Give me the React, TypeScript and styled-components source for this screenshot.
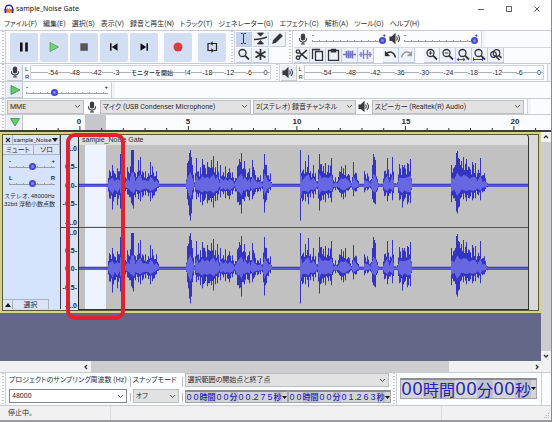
import React, { useState } from "react";
import styled, { createGlobalStyle, css } from "styled-components";

const Global = createGlobalStyle`
  *, *::before, *::after { box-sizing: border-box; }
  html, body { margin: 0; padding: 0; }
  body { background: #f0f0f0; }
  button, input, select { font: inherit; font-feature-settings: inherit; color: inherit; margin: 0; padding: 0; border: 0; border-radius: 0; background: none; }
  svg { display: block; flex: none; }
`;

const INK = "#2c2c30";
const BLUE = "#3333c4";

/* ---------- window frame ---------- */

const Window = styled.div`
  display: flex;
  flex-direction: column;
  min-height: 100vh;
  overflow: hidden;
  border-right: 1px solid #8a8a8e;
  border-bottom: 2px solid #9a9aa0;
  background: #fbfcff;
  color: ${INK};
  font: 7px/10px Roboto, "Noto Sans CJK JP", sans-serif;
  font-feature-settings: "palt";
`;

const TitleBar = styled.header`
  display: flex;
  align-items: center;
  gap: 2px;
  height: 17px;
  padding-left: 4px;
  background: #fff;
  h1 {
    flex: 1;
    margin: 0;
    font: 400 7px/12px "Noto Sans", sans-serif;
    color: #111;
  }
`;

const Caption = styled.div`
  display: flex;
`;

const CaptionButton = styled.button`
  display: grid;
  place-items: center;
  width: 28px;
  height: 17px;
`;

const MenuBar = styled.nav`
  display: flex;
  align-items: center;
  gap: 6px;
  height: 13px;
  padding-left: 4px;
  background: #fff;
  white-space: nowrap;
`;

const MenuButton = styled.button`
  line-height: 12px;
`;

/* ---------- toolbars ---------- */

const Bar = styled.div<{ $h: number }>`
  display: flex;
  align-items: center;
  height: ${(p) => p.$h}px;
  border-top: 1px solid #c9cad2;
`;

const Grip = styled.span<{ $margin?: string }>`
  flex: none;
  align-self: stretch;
  width: 5px;
  margin: ${(p) => p.$margin ?? "0 1px 0 1px"};
  border-right: 1px solid #cfd0d8;
  background: repeating-linear-gradient(#c4c5ce 0 1px, transparent 1px 3px) 1px 0 / 2px 100% no-repeat;
`;

const Divider = styled.span`
  flex: none;
  align-self: stretch;
  width: 4px;
  margin-left: 3px;
  border-left: 1px solid #cfd0d8;
  background: #f3f4f8;
`;

const Transport = styled.div`
  display: flex;
  gap: 2px;
  padding-left: 3px;
`;

const TransportButton = styled.button<{ $apart?: boolean }>`
  display: grid;
  place-items: center;
  width: 28px;
  height: 29px;
  margin-left: ${(p) => (p.$apart ? 4 : 0)}px;
  border-radius: 2px;
  background: #d2def3;
`;

const ToolGrid = styled.div`
  display: grid;
  grid-template-columns: repeat(3, 16px);
  grid-template-rows: repeat(2, 15px);
  gap: 1px;
`;

const ToolButton = styled.button<{ $on?: boolean; $start?: boolean }>`
  display: grid;
  place-items: center;
  width: 16px;
  height: 15px;
  margin-left: ${(p) => (p.$start ? 9 : 0)}px;
  border-right: 1px solid #c3cbe0;
  border-bottom: 1px solid #c3cbe0;
  background: ${(p) => (p.$on ? "#c3d3ee" : "#eef2fb")};
`;

const Stack = styled.div`
  display: flex;
  flex: 1;
  flex-direction: column;
  align-self: stretch;
`;

const StackRow = styled.div`
  display: flex;
  flex: 1;
  align-items: center;
  & + & { border-top: 1px solid #d5d6de; }
`;

const SliderBox = styled.label<{ $w: number }>`
  display: flex;
  flex-direction: column;
  flex: none;
  width: ${(p) => p.$w}px;
  font: 700 6px/4px "Liberation Sans", sans-serif;
`;

const SliderEnds = styled.span`
  display: flex;
  justify-content: space-between;
  height: 4px;
`;

const Slider = styled.input`
  appearance: none;
  display: block;
  width: 100%;
  height: 7px;
  background:
    linear-gradient(#9c9ca6, #9c9ca6) 0 4px / 100% 1px no-repeat,
    repeating-linear-gradient(90deg, #9c9ca6 0 1px, transparent 1px 7px) 0 3px / 100% 1px no-repeat;
  &::-webkit-slider-thumb {
    appearance: none;
    width: 7px;
    height: 7px;
    border: 2px solid #4848d8;
    border-radius: 50%;
    background: #8686e0;
  }
`;

const IconSlot = styled.span<{ $w: number }>`
  display: grid;
  flex: none;
  place-items: center;
  width: ${(p) => p.$w}px;
`;

const SquareButton = styled.button`
  display: grid;
  flex: none;
  place-items: center;
  width: 16px;
  height: 16px;
  border: 1px solid #c3c8d8;
  border-width: 0 1px 1px 0;
  background: #e9eefa;
`;

const Channels = styled.span`
  display: flex;
  flex-direction: column;
  width: 7px;
  padding-left: 2px;
  font: 6px/8px "Liberation Sans", sans-serif;
`;

const Meter = styled.div`
  display: flex;
  flex: 1;
  align-items: center;
  justify-content: space-between;
  align-self: stretch;
  margin: 1px 0;
  padding: 0 2px 0 17px;
  border: 1px solid #d3d4da;
  background: linear-gradient(#aeb0b8, #aeb0b8) 0 50% / 100% 1px no-repeat;
  font: 7px/9px "Liberation Sans", sans-serif;
  white-space: nowrap;
`;

const MeterMark = styled.span`
  background: #fbfcff;
`;

const MeterStart = styled.button`
  background: #fbfcff;
  font: 500 6px/9px "Noto Sans CJK JP", sans-serif;
`;

/* ---------- drop-downs ---------- */

const SelectFrame = styled.span<{ $grow?: number; $white?: boolean }>`
  display: grid;
  flex: ${(p) => p.$grow ?? 1} 1 0;
  align-items: center;
  height: 14px;
  border: 1px solid ${(p) => (p.$white ? "#85868c" : "#bcbdc0")};
  background: ${(p) => (p.$white ? "#fff" : "#e2e2e3")};
  select, svg { grid-area: 1 / 1; }
  select {
    appearance: none;
    width: 100%;
    height: 12px;
    padding-left: 2px;
    text-overflow: ellipsis;
  }
  svg { justify-self: end; margin-right: 2px; pointer-events: none; }
`;

function Select(props: { label: string; value: string; grow?: number; white?: boolean; id?: string }) {
  return (
    <SelectFrame $grow={props.grow} $white={props.white}>
      <select id={props.id} aria-label={props.id ? undefined : props.label} defaultValue={props.value}>
        <option>{props.value}</option>
      </select>
      <svg width="7" height="5" viewBox="0 0 7 5" fill="none" stroke="#555" aria-hidden>
        <path d="M1 1l2.5 2.5L6 1" />
      </svg>
    </SelectFrame>
  );
}

/* ---------- timeline ---------- */

const Ruler = styled.div`
  display: grid;
  flex: 1;
  align-self: stretch;
  svg, ol { grid-area: 1 / 1; width: 100%; height: 100%; }
`;

const RulerLabels = styled.ol`
  display: grid;
  grid-template-columns: 56fr repeat(4, 109fr) 36fr;
  margin: 0;
  padding: 0;
  list-style: none;
  font: 700 8px/14px "Liberation Sans", sans-serif;
  li { width: 18px; margin-left: -9px; text-align: center; }
  li:first-child { grid-column: 2; }
`;

/* ---------- tracks ---------- */

const Workspace = styled.main`
  display: flex;
  flex: 1;
  border-top: 2px solid #3c3c44;
`;

const Canvas = styled.div`
  position: relative;
  flex: 1;
  background: #646785;
`;

const Track = styled.section`
  display: flex;
  height: 181px;
  border: 2px solid #d4cf93;
  border-width: 2px 2px 3px 2px;
  outline: 1px solid #5c5a34;
  outline-offset: -3px;
  background: #d9d9d9;
`;

const TrackPanel = styled.div`
  display: flex;
  flex-direction: column;
  width: 58px;
  margin: 1px 0 1px 1px;
  border-right: 1px solid #3b3b40;
  background: #d5e3fd;
`;

const PanelRow = styled.div`
  display: flex;
  border-bottom: 1px solid #a9b4cb;
`;

const PanelButton = styled.button<{ $grow?: number }>`
  display: flex;
  flex: ${(p) => p.$grow ?? 0} 0 auto;
  align-items: center;
  justify-content: center;
  gap: 1px;
  min-width: 10px;
  height: 9px;
  border-right: 1px solid #a9b4cb;
  background: #dbe5f7;
  white-space: nowrap;
`;

const TrackName = styled(PanelButton)`
  font-size: 6px;
`;

const PanelSlider = styled.div`
  padding: 4px 5px 2px 6px;
`;

const Format = styled.div`
  display: flex;
  flex-direction: column;
  margin: 3px 0 0 1px;
  font: 6px/8px Roboto, "Noto Sans CJK JP", sans-serif;
  white-space: nowrap;
`;

const PanelFoot = styled.div`
  display: flex;
  width: 46px;
  margin-top: auto;
  border-top: 1px solid #a9b4cb;
`;

const Scale = styled.div`
  display: flex;
  flex-direction: column;
  width: 18px;
  padding-top: 10px;
  border-right: 1px solid #222;
  background: #d9e3f5;
`;

const ScaleHalf = styled.ol`
  display: flex;
  flex: 1;
  flex-direction: column;
  justify-content: space-between;
  margin: 0;
  padding: 0 1px 0 0;
  list-style: none;
  font: 700 7px/9px "Liberation Sans", sans-serif;
  text-align: right;
  & + & { border-top: 1px solid #444; }
`;

const ClipLane = styled.div`
  display: flex;
  flex: 1;
  padding-right: 9px;
  border-right: 1px solid #222;
`;

const Clip = styled.div`
  display: flex;
  flex: 1;
  flex-direction: column;
  border: 1px solid #333;
  border-left: 0;
  border-top-right-radius: 4px;
  background: #c1c1c1;
`;

const ClipTitle = styled.div`
  height: 10px;
  padding-left: 3px;
  border-top-right-radius: 3px;
  background: #dedede;
  font: 7px/10px "Liberation Sans", sans-serif;
`;

const Channel = styled.div`
  flex: 1;
  min-height: 0;
  & + & { border-top: 1px solid #555; }
  svg { width: 100%; height: 100%; }
`;

const Highlight = styled.div`
  position: absolute;
  top: 1px;
  left: 66px;
  width: 59px;
  height: 187px;
  border: 4px solid #dc2430;
  border-radius: 9px;
  pointer-events: none;
`;

const scrollPart = css`
  display: grid;
  flex: none;
  place-items: center;
  background: #f1f1f2;
`;

const VScroll = styled.div`
  display: flex;
  flex-direction: column;
  width: 10px;
  background: #cdcdcf;
`;

const VArrow = styled.button`
  ${scrollPart}
  height: 10px;
`;

const HScroll = styled.div`
  display: flex;
  height: 11px;
  background: #f1f1f2;
`;

const HArrow = styled.button<{ $lead?: boolean }>`
  ${scrollPart}
  width: 10px;
  margin-left: ${(p) => (p.$lead ? "81px" : "0")};
`;

const HThumb = styled.span<{ $grow: number; $on?: boolean }>`
  flex: ${(p) => p.$grow} 1 0;
  background: ${(p) => (p.$on ? "#cdcdcf" : "transparent")};
`;

/* ---------- footer ---------- */

const SelectionBar = styled.div`
  display: flex;
  height: 33px;
  border-top: 1px solid #c9cad2;
`;

const Field = styled.div<{ $grow: number }>`
  display: flex;
  flex: ${(p) => p.$grow} 1 0;
  flex-direction: column;
  justify-content: space-between;
  min-width: 0;
  margin: 0 3px 2px 2px;
  white-space: nowrap;
  label { line-height: 14px; }
  ${SelectFrame} { flex: none; }
`;

const VRule = styled.span`
  width: 1px;
  margin: 4px 0;
  background: repeating-linear-gradient(#b9bac2 0 10px, transparent 10px 16px);
`;

const Times = styled.div`
  display: flex;
  justify-content: space-between;
`;

const TimeBox = styled.div<{ $big?: boolean }>`
  display: flex;
  align-items: center;
  border: 1px solid #a5a6ac;
  border-top: 2px solid #8b8c94;
  background: #d3d4d8;
  color: #2222b4;
  font-family: "Liberation Sans", "Noto Sans CJK JP", sans-serif;
  font-size: ${(p) => (p.$big ? 18 : 9)}px;
  line-height: ${(p) => (p.$big ? 18 : 10)}px;
  height: ${(p) => (p.$big ? 21 : 13)}px;
`;

const Cell = styled.span<{ $w: number }>`
  width: ${(p) => p.$w}px;
  text-align: center;
  white-space: nowrap;
`;

const Unit = styled.span<{ $big?: boolean }>`
  background: #c1c2c9;
  font: ${(p) => (p.$big ? "400 16px/18px" : "500 8px/10px")} "Noto Sans CJK JP", sans-serif;
  font-feature-settings: normal;
`;

const BigTimeWrap = styled.div`
  display: flex;
  align-items: center;
  padding: 0 4px 2px 3px;
  border-right: 1px solid #cfd0d8;
  margin-right: 9px;
`;

const StatusBar = styled.footer`
  display: flex;
  height: 15px;
  border-top: 1px solid #c9cad2;
  background: #f0f0f1;
  line-height: 15px;
  align-items: stretch;
`;

const StatusCell = styled.span<{ $grow: number }>`
  flex: ${(p) => p.$grow} 1 0;
  padding-left: 8px;
  border-right: 1px solid #dcdce0;
  &:last-of-type { border: 0; }
`;

/* ---------- icons ---------- */

const Mic = () => (
  <svg width="10" height="12" viewBox="0 0 10 12" fill="none" stroke="#3a3a40" strokeWidth="1.1">
    <rect x="3.4" y="1" width="3.2" height="6" rx="1.6" fill="#3a3a40" />
    <path d="M1.5 5.2v.6a3.5 3.2 0 0 0 7 0v-.6M5 9v2M3 11h4" />
  </svg>
);

const Speaker = () => (
  <svg width="12" height="11" viewBox="0 0 12 11" fill="none" stroke="#3a3a40" strokeWidth="1.1">
    <path d="M1 4h2l3-3v9L3 7.400H1z" fill="#3a3a40" />
    <path d="M7.500 3.500q1.500 2 0 4M9 2q3 3.500 0 7" />
  </svg>
);

const Lens = ({ children }: { children?: React.ReactNode }) => (
  <svg width="13" height="13" viewBox="0 0 13 13" fill="none" stroke="#33333a" strokeWidth="1.3">
    <circle cx="5.500" cy="5" r="3.500" />
    <path d="M8 7.600L12 11.500" strokeWidth="1.800" />
    {children}
  </svg>
);

const Triangle = ({ down }: { down?: boolean }) => (
  <svg width="12" height="12" viewBox="0 0 12 12" fill="#62cf62" stroke="#3b8a45" strokeWidth="0.8">
    <path d={down ? "M1.500 2.500h9L6 10z" : "M2 1.500v9L11 6z"} />
  </svg>
);

const Caret = ({ up }: { up?: boolean }) => (
  <svg width="6" height="4" viewBox="0 0 6 4" fill="#111">
    <path d={up ? "M0 4h6L3 0z" : "M0 0h6L3 4z"} />
  </svg>
);

const Chevron = ({ d, thin }: { d: string; thin?: boolean }) => (
  <svg width="6" height="6" viewBox="0 0 6 6" fill="none" stroke="#333" strokeWidth={thin ? 0.8 : 1.3}>
    <path d={d} />
  </svg>
);

const transport: { name: string; apart?: boolean; icon: React.ReactNode }[] = [
  { name: "一時停止", icon: <path d="M5 4.500h2.600v9H5zM10.200 4.500h2.600v9h-2.600z" fill="#111" /> },
  { name: "再生", icon: <path d="M5 4.500v9L13.500 9z" fill="#74d474" stroke="#4d9e57" strokeWidth=".8" /> },
  { name: "停止", icon: <path d="M5.300 5.300h7.500v7.500H5.300z" fill="#55565c" /> },
  { name: "先頭へ", icon: <path d="M5 5.200h1.500v7.600H5zM12.500 5.200v7.600L6.800 9z" fill="#111" /> },
  { name: "末尾へ", icon: <path d="M11.500 5.200H13v7.600h-1.500zM5.500 5.200v7.600L11.200 9z" fill="#111" /> },
  { name: "録音", apart: true, icon: <circle cx="9" cy="9" r="4.500" fill="#e03a40" /> },
  {
    name: "ループ",
    apart: true,
    icon: (
      <g fill="none" stroke="#222" strokeWidth="1.200">
        <path d="M7 5.500H5v7h4M11 12.500h2.500v-7H9" />
        <path d="M9.500 3.500L7 5.500l2.500 2zM8.500 10.500l2.500 2-2.500 2z" fill="#222" strokeWidth=".2" />
      </g>
    ),
  },
];

const glyph = { width: 13, height: 13, viewBox: "0 0 13 13", fill: "none", stroke: "#303036", strokeWidth: 1.3 };

const tools: { name: string; icon: React.ReactNode }[] = [
  { name: "選択ツール", icon: <svg {...glyph} strokeWidth="1"><path d="M6.500 2v9M4 1.500h1.500l1 .8 1-.8H9M4 11.500h1.500l1-.8 1 .8H9" /></svg> },
  { name: "エンベロープ", icon: <svg {...glyph}><path d="M0 7.500c4-.2 9-.8 13-2.500" strokeWidth="1.600" /><path d="M3.500 1h6L6.500 4.200zM3.500 12h6L6.500 8.500z" fill="#303036" strokeWidth=".8" /></svg> },
  { name: "描画ツール", icon: <svg {...glyph}><path d="M1.500 11.500l1-3.500 6.500-6.500L11.500 4 5 10.500z" fill="#303036" strokeWidth=".5" /></svg> },
  { name: "ズームツール", icon: <Lens /> },
  { name: "マルチツール", icon: <svg {...glyph} strokeWidth="1.700"><path d="M6.500 1v11M1.500 3.500l10 6M11.500 3.500l-10 6" /></svg> },
];

const edits: { name: string; start?: boolean; icon: React.ReactNode }[] = [
  { name: "切り取り", icon: <svg {...glyph}><circle cx="3" cy="3.500" r="1.700" /><circle cx="3" cy="9.700" r="1.700" /><path d="M4.500 4.500L12 10.800M4.500 8.700L12 2" strokeWidth="1.600" /></svg> },
  { name: "コピー", icon: <svg {...glyph}><path d="M4.500 3.500h7v9h-7zM2 10.500H1.500v-9h7V2" /></svg> },
  { name: "貼り付け", icon: <svg {...glyph}><path d="M4.500 2.500h-3v9.800h10V2.500h-3" /><path d="M4.500 1.500h4v2.300h-4z" fill="#303036" /></svg> },
  { name: "トリム", icon: <svg {...glyph} stroke="#7274cc" strokeWidth="1"><path d="M0 6.500h13M3.500 3v7M5.500 2.500v8M7.500 3v7M9.500 2.500v8" strokeWidth="1.600" /></svg> },
  { name: "無音化", icon: <svg {...glyph} stroke="#8486d2" strokeWidth="1.400"><path d="M0 6.500h13M2 4v5M4.500 2v9M8.500 2v9M11 4v5" /></svg> },
  { name: "元に戻す", start: true, icon: <svg {...glyph} strokeWidth="1.600"><path d="M2 6c3-3 8-3 9.500 3.500" /><path d="M1 3v5h5z" fill="#303036" strokeWidth=".3" /></svg> },
  { name: "やり直す", icon: <svg {...glyph} stroke="#9a9ca6" strokeWidth="1.500"><path d="M11 6C8 3 3 3 1.500 9.500" /><path d="M12 3v5H7z" fill="#9a9ca6" strokeWidth=".3" /></svg> },
  { name: "拡大", start: true, icon: <Lens><path d="M3.700 5h3.600M5.500 3.200v3.600" strokeWidth="1" /></Lens> },
  { name: "縮小", icon: <Lens><path d="M3.700 5h3.600" strokeWidth="1" /></Lens> },
  { name: "選択範囲に合わせる", icon: <Lens><path d="M0 11.500h8M2 10l-2 1.500L2 13M6 10l2 1.500L6 13" stroke="#3a3ac8" strokeWidth=".9" /></Lens> },
  { name: "全体に合わせる", icon: <Lens><path d="M.5 11.500h9M.5 9.500v3.500M9.500 9.500v3.500" stroke="#3a3ac8" strokeWidth="1" /></Lens> },
  { name: "ズーム切替", icon: <svg {...glyph} strokeWidth="1.200"><circle cx="7.500" cy="5" r="3.300" /><circle cx="4.500" cy="6.500" r="2.800" /><path d="M6.500 8l4 4M10 7.500l2.500 2.500" strokeWidth="1.600" /></svg> },
];

/* ---------- waveform ---------- */

// [time position, positive peak, negative peak]
const peaks: [number, number, number][] = [
  [79, 1, 1], [107, 1, 1], [109, 15, 13], [112, 20, 24], [114, 12, 12], [117, 17, 20], [119, 14, 10], [120, 31, 23],
  [122, 20, 12], [125, 8, 6], [127, 18, 9], [129, 12, 12], [131, 35, 18], [132, 35, 20], [133, 35, 23], [135, 12, 12], [138, 25, 14],
  [140, 28, 16], [142, 14, 12], [145, 14, 10], [148, 12, 11], [150, 23, 16], [152, 19, 13], [154, 9, 10], [156, 14, 6],
  [159, 1, 1], [185, 1, 1], [187, 22, 14], [189, 32, 30], [190, 35, 35], [191, 28, 28], [192, 20, 14], [194, 3, 2], [196, 27, 14],
  [198, 14, 12], [200, 18, 17], [202, 26, 20], [204, 20, 15], [207, 23, 18], [209, 18, 15], [211, 25, 17], [213, 29, 22],
  [215, 18, 16], [217, 24, 15], [219, 6, 5], [220, 20, 12], [223, 13, 9], [225, 19, 13], [227, 12, 10], [229, 17, 14],
  [232, 13, 9], [234, 4, 3], [237, 19, 17], [239, 26, 20], [241, 32, 28], [243, 17, 14], [244, 24, 16], [247, 12, 11],
  [249, 17, 15], [250, 8, 6], [252, 25, 14], [254, 15, 9], [257, 8, 7], [260, 10, 6], [262, 4, 4], [264, 31, 27],
  [266, 20, 15], [268, 10, 8], [270, 12, 5], [272, 1, 1], [299, 1, 1], [300, 35, 35], [302, 14, 16], [305, 24, 16],
  [308, 30, 19], [310, 14, 12], [313, 20, 13], [315, 12, 9], [317, 4, 4], [319, 31, 25], [321, 21, 15], [325, 22, 17],
  [328, 20, 13], [331, 27, 17], [333, 5, 4], [335, 8, 5], [337, 4, 4], [339, 14, 7], [341, 19, 12], [343, 17, 14],
  [345, 20, 12], [349, 10, 4], [351, 2, 2], [353, 23, 11], [356, 12, 6], [359, 1, 1], [363, 1, 1], [364, 14, 7],
  [367, 12, 5], [370, 5, 3], [372, 20, 14], [373, 31, 17], [374, 28, 18], [375, 25, 19], [378, 2, 2], [382, 1, 1], [384, 14, 11],
  [387, 27, 16], [389, 8, 8], [392, 28, 15], [394, 2, 2], [397, 3, 2], [399, 21, 15], [402, 20, 22], [404, 20, 14],
  [407, 22, 19], [410, 26, 18], [412, 1, 1], [450, 1, 1], [451, 20, 17], [454, 18, 13], [456, 32, 26], [457, 34, 28], [459, 26, 21],
  [461, 24, 12], [463, 28, 14], [466, 26, 16], [469, 18, 13], [472, 23, 15], [475, 22, 13], [477, 12, 9], [480, 27, 15],
  [482, 10, 7], [484, 12, 6], [487, 2, 2], [489, 1, 1], [528, 1, 1],
];

const dips = [0.8, 0.5, 0.65, 0.9, 0.55];

function envelope(scale: number, floor: number, steady = false) {
  const top: string[] = [];
  const bottom: string[] = [];
  for (let i = 0; i < peaks.length - 1; i++) {
    const [x0, u0, d0] = peaks[i];
    const [x1, u1, d1] = peaks[i + 1];
    for (let x = x0; x < x1; x++) {
      const t = (x - x0) / (x1 - x0);
      const dip = x === x0 || steady ? 1 : dips[x % 5];
      const up = Math.max(floor, (u0 + (u1 - u0) * t) * dip * scale);
      const down = Math.max(floor, (d0 + (d1 - d0) * t) * dip * scale);
      top.push(`${x - 79} ${40 - up}h1`);
      bottom.unshift(`${x - 78} ${40 + down}h-1`);
    }
  }
  return `M${top.join("L")}L${bottom.join("L")}Z`;
}

const peakPath = envelope(1, 1.5);
const rmsPath = envelope(0.36, 0.5, true);

const Waveform = ({ label }: { label: string }) => (
  <svg viewBox="0 0 449 81" preserveAspectRatio="none" role="img" aria-label={label}>
    <rect x="6" width="21" height="81" fill="#edf3ff" />
    <path d={peakPath} fill={BLUE} />
    <path d={rmsPath} fill="#6767e2" />
  </svg>
);

/* ---------- composed parts ---------- */

function LevelSlider(props: { label: string; width: number; value: number; ends?: [string, string] }) {
  const [value, setValue] = useState(props.value);
  const [low, high] = props.ends ?? ["-", "+"];
  return (
    <SliderBox $w={props.width}>
      <SliderEnds><span>{low}</span><span>{high}</span></SliderEnds>
      <Slider type="range" aria-label={props.label} value={value} onChange={(e) => setValue(Number(e.target.value))} />
    </SliderBox>
  );
}

function Time({ text, big }: { text: string; big?: boolean }) {
  return (
    <TimeBox $big={big}>
      {text.split("").map((c, i) =>
        /\d/.test(c) ? (
          <Cell key={i} $w={big ? 11 : 7}>{c}</Cell>
        ) : c === "." ? (
          <Cell key={i} $w={1}>{c}</Cell>
        ) : (
          <Unit key={i} $big={big}>{c}</Unit>
        ),
      )}
      <svg width="5" height="3" viewBox="0 0 5 3" fill="#111"><path d="M0 0h5L2.500 3z" /></svg>
    </TimeBox>
  );
}

const menus = ["ファイル(F)", "編集(E)", "選択(S)", "表示(V)", "録音と再生(N)", "トラック(T)", "ジェネレーター(G)", "エフェクト(C)", "解析(A)", "ツール(O)", "ヘルプ(H)"];
const levels = ["-54", "-48", "-42", "-36", "-30", "-24", "-18", "-12", "-6", "0"];
const amplitudes = ["1.0", "0.5-", "0.0-", "-0.5-", "-1.0"];

export default function App() {
  return (
    <Window>
      <Global />
      <TitleBar>
        <svg width="10" height="10" viewBox="0 0 10 10" fill="none">
          <path d="M1.300 6.500V5a3.700 3.700 0 0 1 7.400 0v1.500" stroke="#2a2ab0" strokeWidth="1.500" />
          <path d="M.5 5h2v4h-2zM7.500 5h2v4h-2z" fill="#2a2ab0" />
          <path d="M2.500 6l1-1.500 1 1 1-1 1 1 1 .5-.8 2-1.200.5-1.500-.3-1.200-.2z" fill="#f08a20" stroke="#d4371c" strokeWidth=".6" />
        </svg>
        <h1>sample_Noise Gate</h1>
        <Caption>
          <CaptionButton aria-label="最小化"><Chevron thin d="M0 3.500h6" /></CaptionButton>
          <CaptionButton aria-label="最大化"><Chevron thin d="M.5 .5h5v5h-5z" /></CaptionButton>
          <CaptionButton aria-label="閉じる"><Chevron thin d="M.5 .5l5 5M5.500 .5l-5 5" /></CaptionButton>
        </Caption>
      </TitleBar>
      <MenuBar>
        {menus.map((m) => <MenuButton key={m}>{m}</MenuButton>)}
      </MenuBar>

      <Bar $h={33}>
        <Grip $margin="0 1px 0 1px" />
        <Transport>
          {transport.map((t) => (
            <TransportButton key={t.name} aria-label={t.name} $apart={t.apart}>
              <svg width="18" height="18" viewBox="0 0 18 18">{t.icon}</svg>
            </TransportButton>
          ))}
        </Transport>
        <Grip $margin="0 1px 0 4px" />
        <ToolGrid>
          {tools.map((t, i) => (
            <ToolButton key={t.name} aria-label={t.name} $on={i === 0}>{t.icon}</ToolButton>
          ))}
        </ToolGrid>
        <Grip $margin="0 1px 0 2px" />
        <Stack>
          <StackRow>
            <IconSlot $w={18}><Mic /></IconSlot>
            <LevelSlider label="録音音量" width={74} value={100} />
            <IconSlot $w={18}><Speaker /></IconSlot>
            <LevelSlider label="再生音量" width={74} value={100} />
            <Divider />
          </StackRow>
          <StackRow>
            {edits.map((t) => (
              <ToolButton key={t.name} aria-label={t.name} $start={t.start}>{t.icon}</ToolButton>
            ))}
          </StackRow>
        </Stack>
      </Bar>

      <Bar $h={18}>
        <Grip />
        <SquareButton aria-label="録音メーター"><Mic /></SquareButton>
        <Channels><span>L</span><span>R</span></Channels>
        <Meter>
          {levels.slice(0, 3).map((l) => <MeterMark key={l}>{l}</MeterMark>)}
          <MeterMark>-3</MeterMark>
          <MeterStart>モニターを開始</MeterStart>
          <MeterMark>!4</MeterMark>
          {levels.slice(6).map((l) => <MeterMark key={l}>{l}</MeterMark>)}
        </Meter>
        <Grip $margin="0 1px 0 4px" />
        <SquareButton aria-label="再生メーター"><Speaker /></SquareButton>
        <Channels><span>L</span><span>R</span></Channels>
        <Meter>
          {levels.map((l) => <MeterMark key={l}>{l}</MeterMark>)}
        </Meter>
        <Divider />
      </Bar>

      <Bar $h={17}>
        <Grip />
        <SquareButton aria-label="指定速度で再生"><Triangle /></SquareButton>
        <IconSlot $w={3} />
        <LevelSlider label="再生速度" width={82} value={33} />
        <Divider />
      </Bar>

      <Bar $h={16}>
        <Grip />
        <Select label="オーディオホスト" value="MME" grow={76} />
        <IconSlot $w={16}><Mic /></IconSlot>
        <Select label="録音デバイス" value="マイク (USB Condenser Microphone)" grow={152} />
        <IconSlot $w={2} />
        <Select label="録音チャンネル" value="2(ステレオ) 録音チャンネル" grow={102} />
        <IconSlot $w={16}><Speaker /></IconSlot>
        <Select label="再生デバイス" value="スピーカー (Realtek(R) Audio)" grow={153} />
        <Divider />
        <IconSlot $w={20} />
      </Bar>

      <Bar $h={16}>
        <Grip />
        <SquareButton aria-label="タイムラインを固定"><Triangle down /></SquareButton>
        <Ruler>
          <svg viewBox="0 0 528 15" preserveAspectRatio="none" aria-hidden>
            <rect x="62" width="21" height="15" fill="#c6c7cc" />
            {Array.from({ length: 24 }, (_, i) => (
              <rect key={i} x={13 + i * 21.7} y={i % 5 === 2 ? 11 : 13} width="1" height="4" fill="#333" />
            ))}
          </svg>
          <RulerLabels>
            {["0", "5", "10", "15", "20"].map((n) => <li key={n}>{n}</li>)}
          </RulerLabels>
        </Ruler>
      </Bar>

      <Workspace>
        <Canvas>
          <Track>
            <TrackPanel>
              <PanelRow>
                <PanelButton aria-label="トラックを閉じる"><Chevron d="M1 1l4 4M5 1L1 5" /></PanelButton>
                <TrackName $grow={1}>sample_Noise <Caret /></TrackName>
              </PanelRow>
              <PanelRow>
                <PanelButton $grow={1}>ミュート</PanelButton>
                <PanelButton $grow={2}>ソロ</PanelButton>
              </PanelRow>
              <PanelSlider><LevelSlider label="ゲイン" width={46} value={50} /></PanelSlider>
              <PanelSlider><LevelSlider label="パン" width={46} value={50} ends={["L", "R"]} /></PanelSlider>
              <Format>
                <span>ステレオ, 48000Hz</span>
                <span>32bit 浮動小数点数</span>
              </Format>
              <PanelFoot>
                <PanelButton aria-label="折りたたむ"><Caret up /></PanelButton>
                <PanelButton $grow={1}>選択</PanelButton>
              </PanelFoot>
            </TrackPanel>
            <Scale>
              {[0, 1].map((c) => (
                <ScaleHalf key={c}>
                  {amplitudes.map((a) => <li key={a}>{a}</li>)}
                </ScaleHalf>
              ))}
            </Scale>
            <ClipLane>
              <Clip>
                <ClipTitle>sample_Noise Gate</ClipTitle>
                <Channel><Waveform label="左チャンネル" /></Channel>
                <Channel><Waveform label="右チャンネル" /></Channel>
              </Clip>
            </ClipLane>
          </Track>
          <Highlight />
        </Canvas>
        <VScroll>
          <VArrow aria-label="上へ"><Chevron d="M1 4l2-2 2 2" /></VArrow>
          <HThumb $grow={1} $on />
          <VArrow aria-label="下へ"><Chevron d="M1 2l2 2 2-2" /></VArrow>
        </VScroll>
      </Workspace>

      <HScroll>
        <HArrow $lead aria-label="左へ"><Chevron d="M4 1L2 3l2 2" /></HArrow>
        <HThumb $grow={358} $on />
        <HThumb $grow={83} />
        <HArrow aria-label="右へ"><Chevron d="M2 1l2 2-2 2" /></HArrow>
        <IconSlot $w={9} />
      </HScroll>

      <SelectionBar>
        <Grip />
        <Field $grow={118}>
          <label htmlFor="rate">プロジェクトのサンプリング周波数 (Hz)</label>
          <Select id="rate" label="" value="48000" white />
        </Field>
        <VRule />
        <Field $grow={46}>
          <label htmlFor="snap">スナップモード</label>
          <Select id="snap" label="" value="オフ" />
        </Field>
        <VRule />
        <Field $grow={205}>
          <Select label="選択範囲の表示" value="選択範囲の開始点と終了点" />
          <Times>
            <Time text="00時間00分00.275秒" />
            <Time text="00時間00分01.263秒" />
          </Times>
        </Field>
        <Grip $margin="0" />
        <BigTimeWrap><Time big text="00時間00分00秒" /></BigTimeWrap>
      </SelectionBar>
      <StatusBar>
        <StatusCell $grow={107}>停止中。</StatusCell>
        <StatusCell $grow={338} />
        <StatusCell $grow={96} />
        <svg width="10" height="14" viewBox="0 0 10 14" fill="#b5b5ba">
          <path d="M7 11h1v1H7zM5 11h1v1H5zM3 11h1v1H3zM7 9h1v1H7zM5 9h1v1H5zM7 7h1v1H7z" />
        </svg>
      </StatusBar>
    </Window>
  );
}
